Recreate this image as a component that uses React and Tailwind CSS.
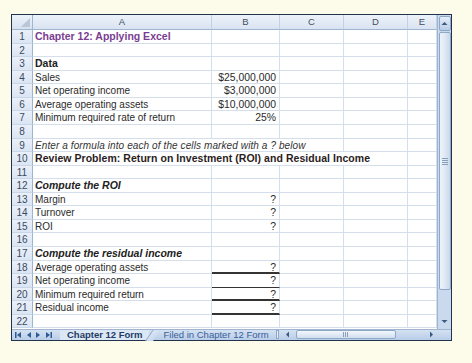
import React from 'react';

// column widths in px (A..E)
const COLS = [
  { key: 'A', w: 179 },
  { key: 'B', w: 68 },
  { key: 'C', w: 64 },
  { key: 'D', w: 64 },
  { key: 'E', w: 29 },
];

const ROWS = [
  { a: 'Chapter 12: Applying Excel', style: 'font-bold text-[10.5px] text-[#7a3d92]' },
  {},
  { a: 'Data', style: 'font-bold text-[10.5px] text-[#222]' },
  { a: 'Sales', b: '$25,000,000' },
  { a: 'Net operating income', b: '$3,000,000' },
  { a: 'Average operating assets', b: '$10,000,000' },
  { a: 'Minimum required rate of return', b: '25%' },
  {},
  { a: 'Enter a formula into each of the cells marked with a ? below', style: 'italic text-[10px] tracking-[0.1px] text-[#333]', span: 3 },
  { a: 'Review Problem: Return on Investment (ROI) and Residual Income', style: 'font-bold text-[10.5px] tracking-[0.05px] text-[#2b1c1c]', span: 4 },
  {},
  { a: 'Compute the ROI', style: 'font-bold italic text-[10.5px] text-[#222]' },
  { a: 'Margin', b: '?' },
  { a: 'Turnover', b: '?' },
  { a: 'ROI', b: '?' },
  {},
  { a: 'Compute the residual income', style: 'font-bold italic text-[10.5px] text-[#222]' },
  { a: 'Average operating assets', b: '?', bb: 'border-b-2 border-b-[#333]' },
  { a: 'Net operating income', b: '?', bb: 'border-b border-b-[#333]' },
  { a: 'Minimum required return', b: '?', bb: 'border-b-2 border-b-[#333]' },
  { a: 'Residual income', b: '?', bb: 'border-b-2 border-b-[#333]' },
  {},
];

function Row({ n, row }) {
  const span = row.span || 1;
  const aWidth = COLS.slice(0, span).reduce((s, c) => s + c.w, 0);
  return (
    <div className="flex h-[13.57px]">
      <div className="w-[21px] shrink-0 bg-gradient-to-b from-[#eaf0f9] to-[#dbe5f3] border-r border-r-[#9fb5cf] border-b border-b-[#c9d6e8] text-[10px] leading-[13px] text-center text-[#3b4a5f]">
        {n}
      </div>
      <div
        className={`shrink-0 border-r border-b border-[#d5deeb] bg-white px-[2px] leading-[13px] whitespace-nowrap overflow-visible ${row.style || 'text-[10px] text-[#2a2a2a]'}`}
        style={{ width: aWidth }}
      >
        {row.a}
      </div>
      {COLS.slice(span).map((c) => (
        <div
          key={c.key}
          className={`shrink-0 border-r border-[#d5deeb] bg-white px-[3px] text-[10.4px] leading-[13px] text-right text-[#2a2a2a] ${
            c.key === 'B' && row.bb ? row.bb : 'border-b'
          }`}
          style={{ width: c.w }}
        >
          {c.key === 'B' ? row.b : ''}
        </div>
      ))}
    </div>
  );
}

function NavBtn({ dir, bar }) {
  return (
    <svg width="9" height="8" viewBox="0 0 9 8">
      {dir === 'l' ? (
        <>
          {bar && <rect x="1" y="1" width="1.5" height="6" fill="#2f5a94" />}
          <path d="M7 1 L3 4 L7 7 Z" fill="#2f5a94" />
        </>
      ) : (
        <>
          <path d="M2 1 L6 4 L2 7 Z" fill="#2f5a94" />
          {bar && <rect x="6.5" y="1" width="1.5" height="6" fill="#2f5a94" />}
        </>
      )}
    </svg>
  );
}

export default function App() {
  return (
    <div className="w-[472px] h-[363px] bg-[#fdfbea] pt-[14px] pl-[11px] font-['Liberation_Sans',Arial,sans-serif]">
      <div className="w-[441px] h-[327px] border border-[#22344d] flex flex-col bg-white">
        <div className="flex">
          <div className="w-[425px]">
            {/* column header */}
            <div className="flex h-[15px]">
              <div className="w-[21px] shrink-0 bg-gradient-to-b from-[#edf2f9] to-[#d6e1f0] border-r border-b border-[#9fb5cf] relative">
                <div className="absolute right-[2px] bottom-[2px] w-0 h-0 border-l-[9px] border-l-transparent border-b-[9px] border-b-[#b8c6d8]" />
              </div>
              {COLS.map((c) => (
                <div
                  key={c.key}
                  className="shrink-0 bg-gradient-to-b from-[#edf2f9] to-[#d9e3f1] border-r border-r-[#c2d1e4] border-b border-b-[#9fb5cf] text-center text-[9.5px] leading-[14px] text-[#3f4d60]"
                  style={{ width: c.w }}
                >
                  {c.key}
                </div>
              ))}
            </div>
            {ROWS.map((r, i) => (
              <Row key={i} n={i + 1} row={r} />
            ))}
          </div>
          {/* vertical scrollbar */}
          <div className="w-[14px] h-[313.5px] bg-[#c9d9ee] border-l border-[#9fb5cf] flex flex-col items-center">
            <div className="w-[12px] h-[15px] mt-[1px] bg-gradient-to-b from-[#e6eef9] to-[#b9cce6] border border-[#8ea8c8] rounded-[2px] flex items-center justify-center">
              <svg width="7" height="5" viewBox="0 0 7 5"><path d="M0.5 4 L3.5 1 L6.5 4 Z" fill="#3c5a80" /></svg>
            </div>
            <div className="w-[12px] h-[258px] mt-[1px] bg-gradient-to-r from-[#eef3fa] via-[#dfe8f4] to-[#c9d8eb] border border-[#8ea8c8] rounded-[2px] flex items-center justify-center">
              <div className="flex flex-col gap-[1px]">
                <div className="w-[6px] h-[1px] bg-[#8a9fb9]" />
                <div className="w-[6px] h-[1px] bg-[#8a9fb9]" />
                <div className="w-[6px] h-[1px] bg-[#8a9fb9]" />
                <div className="w-[6px] h-[1px] bg-[#8a9fb9]" />
              </div>
            </div>
            <div className="flex-1" />
            <div className="w-[12px] h-[12px] mb-[1px] flex items-center justify-center">
              <svg width="7" height="5" viewBox="0 0 7 5"><path d="M0.5 1 L3.5 4 L6.5 1 Z" fill="#3c5a80" /></svg>
            </div>
          </div>
        </div>
        {/* sheet tabs bar */}
        <div className="flex-1 flex items-center bg-gradient-to-b from-[#d4e1f2] to-[#b9cde8] border-t border-[#9fb5cf]">
          <div className="flex items-center gap-[1px] pl-[2px] w-[48px]">
            <NavBtn dir="l" bar />
            <NavBtn dir="l" />
            <NavBtn dir="r" />
            <NavBtn dir="r" bar />
          </div>
          <div className="h-full flex items-center pl-[7px] pr-[6px] bg-[#dce7f5] text-[9.5px] font-bold text-[#1f3b66] leading-none">
            Chapter 12 Form
          </div>
          <div className="h-full w-[8px] bg-gradient-to-br from-[#dce7f5] to-[#c6d7ed] border-l border-[#8ea8c8] -skew-x-[35deg]" />
          <div className="h-full flex items-center pl-[7px] pr-[4px] text-[9.5px] text-[#3a5e98] leading-none">
            Filed in Chapter 12 Form
          </div>
          <div className="w-[3px] h-[9px] ml-[3px] border border-[#8ea8c8] bg-[#e7eef8]" />
          {/* horizontal scrollbar */}
          <div className="flex-1 flex items-center ml-[3px] h-[10px]">
            <div className="w-[12px] flex items-center justify-center">
              <svg width="5" height="7" viewBox="0 0 5 7"><path d="M4 0.5 L1 3.5 L4 6.5 Z" fill="#3c5a80" /></svg>
            </div>
            <div className="w-[100px] h-[9px] ml-[2px] bg-gradient-to-b from-[#f2f6fb] to-[#d2dfef] border border-[#8ea8c8] rounded-[2px] flex items-center justify-center">
              <div className="flex gap-[1px]">
                <div className="w-[1px] h-[5px] bg-[#8a9fb9]" />
                <div className="w-[1px] h-[5px] bg-[#8a9fb9]" />
                <div className="w-[1px] h-[5px] bg-[#8a9fb9]" />
              </div>
            </div>
            <div className="flex-1" />
            <div className="w-[12px] flex items-center justify-center">
              <svg width="5" height="7" viewBox="0 0 5 7"><path d="M1 0.5 L4 3.5 L1 6.5 Z" fill="#3c5a80" /></svg>
            </div>
          </div>
          <div className="w-[14px]" />
        </div>
      </div>
    </div>
  );
}
